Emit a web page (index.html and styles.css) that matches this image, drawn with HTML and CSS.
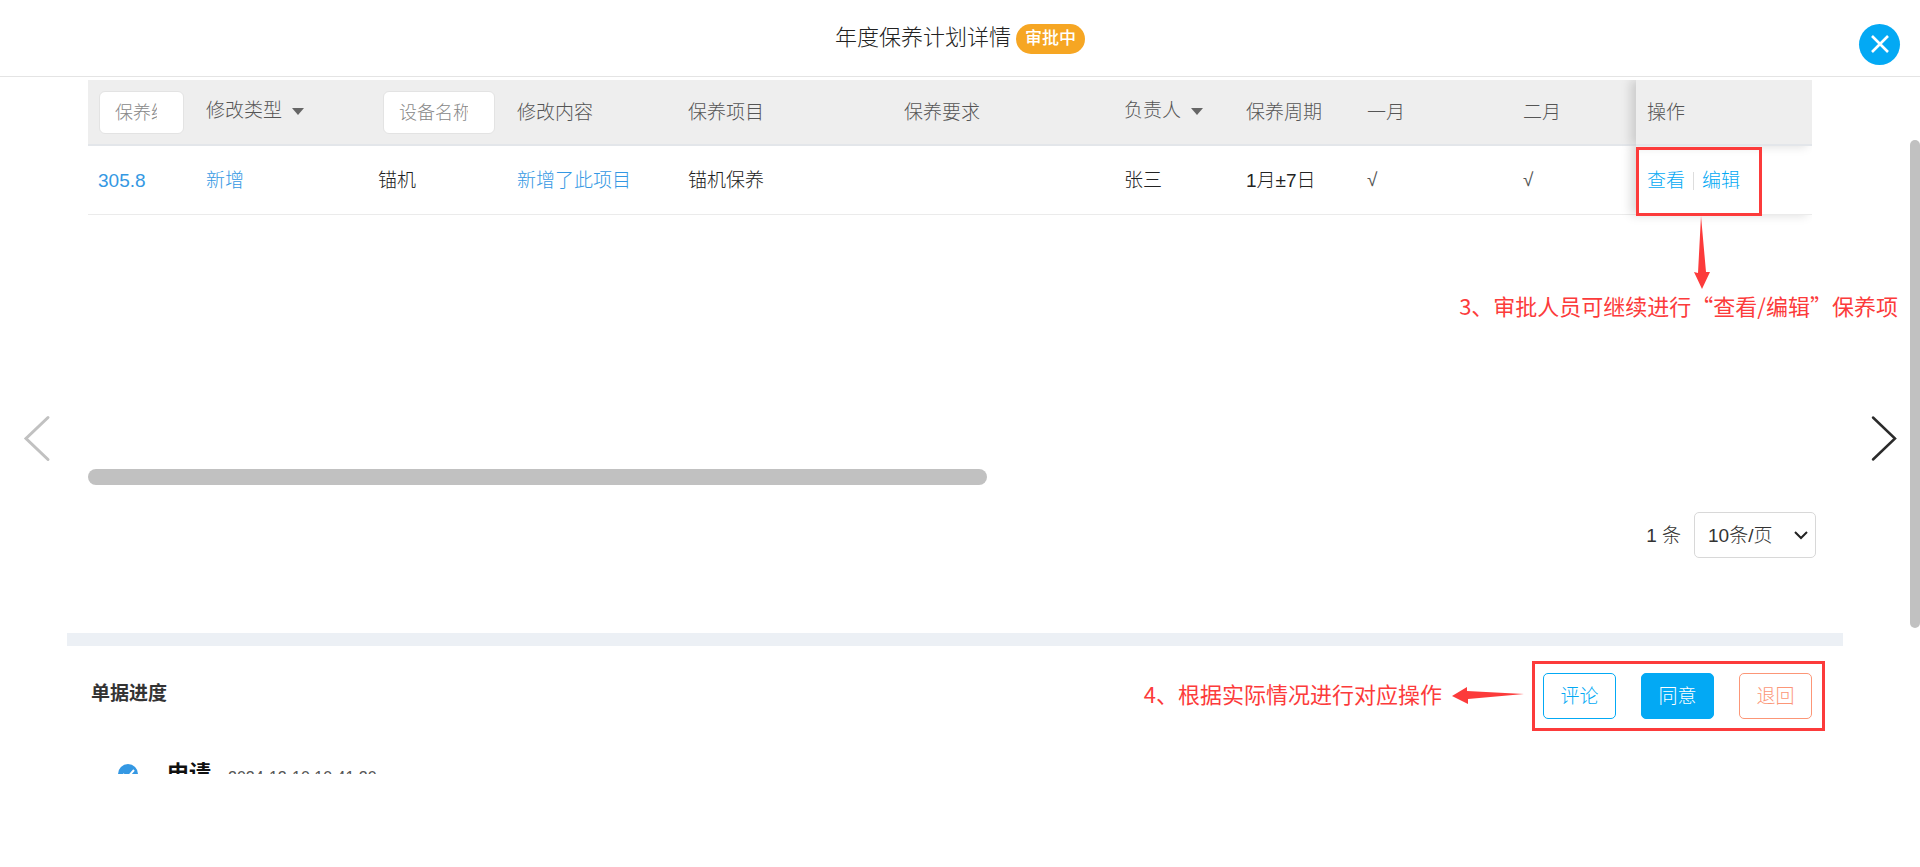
FILE: index.html
```html
<!DOCTYPE html>
<html lang="zh-CN">
<head>
<meta charset="utf-8">
<title>年度保养计划详情</title>
<link rel="stylesheet" href="styles.css">
</head>
<body>
<header class="topbar">
  <h1 class="title">年度保养计划详情</h1>
  <span class="badge">审批中</span>
  <button class="close" type="button" aria-label="关闭">
    <svg width="20" height="20" viewBox="0 0 20 20"><path d="M2 1 L18 17 M18 1 L2 17" fill="none" stroke="#fff" stroke-width="2.6"/></svg>
  </button>
</header>
<main class="viewport">
  <button class="nav nav-prev" type="button" aria-label="上一条">
    <svg width="30" height="48" viewBox="0 0 30 48"><path d="M27 3.500 L5 24.500 L27 45.500" fill="none" stroke="#c1c1c1" stroke-width="3" stroke-linecap="round"/></svg>
  </button>
  <div class="content">
    <section class="plan">
      <div class="table-area">
        <table class="grid">
          <colgroup>
            <col class="c-no"><col class="c-type"><col class="c-device"><col class="c-change"><col class="c-item"><col class="c-req"><col class="c-owner"><col class="c-cycle"><col class="c-jan"><col class="c-feb"><col class="c-op">
          </colgroup>
          <thead>
            <tr>
              <th><input class="filter filter-no" type="text" placeholder="保养编号" aria-label="保养编号"></th>
              <th><button class="sort" type="button">修改类型<span class="caret"></span></button></th>
              <th><input class="filter filter-device" type="text" placeholder="设备名称" aria-label="设备名称"></th>
              <th>修改内容</th>
              <th>保养项目</th>
              <th>保养要求</th>
              <th><button class="sort" type="button">负责人<span class="caret"></span></button></th>
              <th>保养周期</th>
              <th>一月</th>
              <th>二月</th>
              <th class="fixed">操作</th>
            </tr>
          </thead>
          <tbody>
            <tr>
              <td class="info">305.8</td>
              <td class="info">新增</td>
              <td>锚机</td>
              <td class="info">新增了此项目</td>
              <td>锚机保养</td>
              <td></td>
              <td>张三</td>
              <td>1月±7日</td>
              <td class="tick">√</td>
              <td class="tick">√</td>
              <td class="fixed"><div class="actions"><a href="#">查看</a><span class="divider"></span><a href="#">编辑</a></div>
                <div class="mark mark-actions"></div>
                <svg class="arrow-down" width="20" height="76" viewBox="0 0 20 76"><path d="M9 0 L14 56 L18 56 L10 73 L2 56 L6 57 Z" fill="#fc3b3b"/></svg>
              </td>
            </tr>
          </tbody>
        </table>
        <p class="note note-actions">3、审批人员可继续进行“查看/编辑”保养项</p>
      </div>
      <div class="hscroll"></div>
      <div class="pager">
        <span class="total">1 条</span>
        <div class="size-wrap">
          <select class="size" aria-label="每页条数"><option>10条/页</option></select>
          <svg class="chevron" width="14" height="9" viewBox="0 0 14 9"><path d="M1 1 L7 7 L13 1" fill="none" stroke="#222" stroke-width="2"/></svg>
        </div>
      </div>
    </section>
    <div class="band"></div>
    <section class="progress">
      <div class="progress-head">
        <h2 class="subtitle">单据进度</h2>
        <p class="note note-ops">4、根据实际情况进行对应操作</p>
        <svg class="arrow-left" width="74" height="18" viewBox="0 0 74 18"><path d="M1 9 L16 0 L16 4 L73 7 L17 12 L17 17 Z" fill="#fc3b3b"/></svg>
        <div class="mark ops">
          <button class="btn btn-comment" type="button">评论</button>
          <button class="btn btn-agree" type="button">同意</button>
          <button class="btn btn-return" type="button">退回</button>
        </div>
      </div>
      <div class="step">
        <svg class="step-icon" width="20" height="20" viewBox="0 0 20 20"><circle cx="10" cy="10" r="10" fill="#3498e3"/><path d="M5 10 L9 14 L16 6" fill="none" stroke="#fff" stroke-width="2"/></svg>
        <strong class="step-name">申请</strong>
        <time class="step-time">2024-12-10 10:41:20</time>
      </div>
    </section>
  </div>
  <button class="nav nav-next" type="button" aria-label="下一条">
    <svg width="30" height="48" viewBox="0 0 30 48"><path d="M3 3.500 L25 24.500 L3 45.500" fill="none" stroke="#2b2b2b" stroke-width="2.500" stroke-linecap="round"/></svg>
  </button>
  <div class="vscroll"></div>
</main>
</body>
</html>
```
FILE: styles.css
```css
* { box-sizing: border-box; }

body {
  margin: 0;
  background: #fff;
  color: #222;
  font: 300 19px/28px "Liberation Sans", "Noto Sans CJK SC", sans-serif;
}

h1, h2, p { margin: 0; }

button, input, select { font: inherit; color: inherit; }

button { cursor: pointer; padding: 0; border: 0; background: none; }

a { color: #03a9f4; text-decoration: none; }

.topbar {
  position: relative;
  display: flex;
  justify-content: center;
  align-items: center;
  gap: 5px;
  height: 77px;
  padding-top: 2px;
  border-bottom: 1px solid #e4e4e4;
}

.title { padding-bottom: 2px; font-size: 22px; font-weight: 300; line-height: 32px; }

.badge {
  padding: 0 9px;
  border-radius: 15px;
  background: #f6a623;
  color: #fff;
  font-size: 17px;
  font-weight: 500;
  line-height: 30px;
}

.close {
  position: absolute;
  top: 24px;
  right: 20px;
  display: grid;
  place-items: center;
  width: 41px;
  height: 41px;
  border-radius: 50%;
  background: #03a9f4;
}

.viewport {
  position: relative;
  height: 697px;
  padding: 3px 77px 0 67px;
  overflow: hidden;
}

.nav { position: absolute; top: 337px; height: 48px; }
.nav svg { display: block; }
.nav-prev { left: 21px; }
.nav-next { right: 20px; }

.vscroll {
  position: absolute;
  top: 63px;
  right: 0;
  width: 10px;
  height: 488px;
  border-radius: 5px;
  background: #c1c1c1;
}

.plan { padding: 0 27px 75px 21px; }

.table-area { height: 389px; margin-right: 4px; }

.grid {
  width: 100%;
  table-layout: fixed;
  border-collapse: separate;
  border-spacing: 0;
}

.c-no { width: 108px; }
.c-type { width: 172px; }
.c-device { width: 139px; }
.c-change { width: 171px; }
.c-item { width: 216px; }
.c-req { width: 220px; }
.c-owner { width: 122px; }
.c-cycle { width: 121px; }
.c-jan { width: 156px; }
.c-feb { width: 123px; }

.grid th, .grid td {
  padding: 2px 10px 0;
  text-align: left;
  vertical-align: middle;
  white-space: nowrap;
  font-weight: 300;
}

.grid th {
  height: 66px;
  background: #eee;
  border-bottom: 2px solid #e3e6ea;
  color: #555;
}

.grid td { height: 69px; border-bottom: 1px solid #ebebeb; }

.grid td.info { color: #3498e3; }
.grid td.tick { padding-top: 0; color: #555; }

.grid .fixed {
  position: relative;
  padding-left: 11px;
  box-shadow: -5px 0 10px rgba(0, 0, 0, .15);
  clip-path: inset(0 0 -200px -20px);
}

.filter {
  display: block;
  height: 43px;
  border: 1px solid #e3e3e3;
  border-radius: 6px;
  background: #fff;
  padding: 2px 26px 0 15px;
  font-size: 18px;
}

.grid th:has(.filter) { padding-top: 0; }

.filter::placeholder { color: #888; opacity: 1; }
.filter-no { width: 85px; margin-left: 1px; }
.filter-device { width: 112px; margin-left: 5px; }

.sort {
  display: flex;
  align-items: center;
  gap: 10px;
  padding-bottom: 4px;
}

.caret {
  border: 6px solid transparent;
  border-top: 7px solid #666;
  border-bottom: 0;
}

.actions { display: flex; align-items: center; gap: 8px; }

.divider { width: 1px; height: 18px; background: #ddd; }

.mark { border: 3px solid #fc3b3b; }

.mark-actions {
  position: absolute;
  top: 1px;
  left: 0;
  width: 126px;
  height: 69px;
}

.arrow-down { position: absolute; top: 70px; left: 56px; }

.note {
  color: #fc3b3b;
  font-size: 22px;
  font-weight: 400;
  line-height: 32px;
  font-family: "Noto Sans CJK SC", sans-serif;
  white-space: nowrap;
}

.note-actions { margin: 74px -86px 0 0; text-align: right; }
.note-ops { padding-bottom: 6px; }

.hscroll { width: 899px; height: 16px; border-radius: 8px; background: #c1c1c1; }

.pager {
  display: flex;
  justify-content: flex-end;
  align-items: center;
  gap: 13px;
  margin-top: 27px;
  color: #333;
}

.total { padding-top: 2px; }

.size-wrap { position: relative; }

.size {
  display: block;
  appearance: none;
  width: 122px;
  height: 46px;
  padding: 1px 13px 0;
  border: 1px solid #d8d8d8;
  border-radius: 5px;
  background: #fff;
}

.chevron { position: absolute; top: 19px; right: 8px; pointer-events: none; }

.band { height: 13px; background: #ecf0f5; }

.progress { padding: 15px 18px 0 24px; }

.progress-head { display: flex; align-items: center; }

.subtitle { flex: 1; padding-bottom: 4px; color: #333; font-size: 19px; font-weight: 700; line-height: 28px; }

.arrow-left { margin: 0 7px 0 9px; }

.ops { display: flex; gap: 25px; padding: 9px 10px 9px 8px; }

.btn {
  width: 73px;
  height: 46px;
  padding-top: 2px;
  border: 1px solid;
  border-radius: 5px;
  background: #fff;
}

.btn-comment { color: #03a9f4; }
.btn-agree { border-color: #03a9f4; background: #03a9f4; color: #fff; }
.btn-return { color: #fc9677; }

.step {
  display: flex;
  align-items: center;
  margin-top: 25px;
  padding-left: 27px;
}

.step-name { margin-left: 29px; color: #111; font-size: 22px; font-weight: 700; line-height: 36px; }
.step-time { margin-left: 17px; padding-top: 8px; color: #555; font-size: 16px; }
```
